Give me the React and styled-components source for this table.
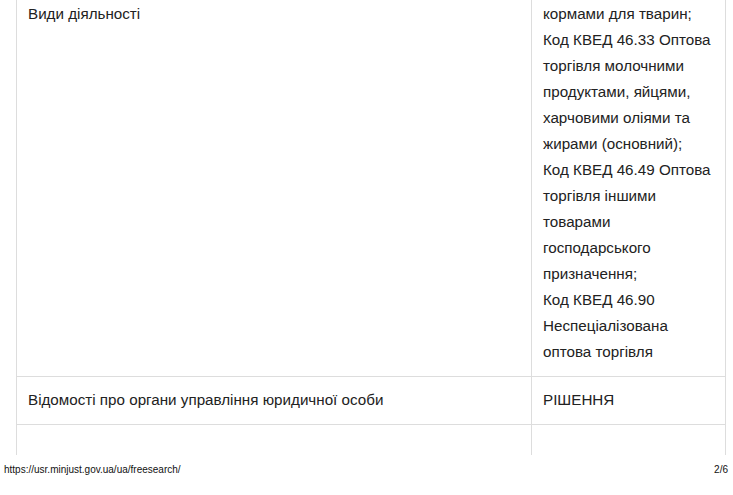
import React from "react";
import styled, { createGlobalStyle } from "styled-components";

const Global = createGlobalStyle`
  html, body { margin: 0; padding: 0; background: #fff; }
  body { font-family: "Liberation Sans", Arial, sans-serif; color: #222; }
`;

const Page = styled.div`
  width: 733px;
  height: 495px;
  display: flex;
  flex-direction: column;
  overflow: hidden;
`;

const Sheet = styled.div`
  height: 455px;
  overflow: hidden;
  padding: 0 8px 0 16px;
`;

const Table = styled.div`
  border-left: 1px solid #ddd;
  border-right: 1px solid #ddd;
  width: 708px;
`;

const Row = styled.div`
  display: grid;
  grid-template-columns: 514px 1fr;
  border-bottom: 1px solid #ddd;
`;

const Cell = styled.div`
  padding: ${(p) => (p.$continued ? "1px" : "10px")} 8px 11px 11px;
  font-size: 15.2px;
  line-height: 26px;
  min-height: ${(p) => (p.$empty ? "30px" : "0")};
  & + & {
    border-left: 1px solid #ddd;
  }
`;

const Entry = styled.div``;

const Footer = styled.div`
  display: flex;
  justify-content: space-between;
  align-items: center;
  height: 28px;
  padding: 0 5px 0 4px;
  font-size: 10px;
  color: #111;
`;

const activities = [
  "кормами для тварин;",
  "Код КВЕД 46.33 Оптова торгівля молочними продуктами, яйцями, харчовими оліями та жирами (основний);",
  "Код КВЕД 46.49 Оптова торгівля іншими товарами господарського призначення;",
  "Код КВЕД 46.90 Неспеціалізована оптова торгівля",
];

export default function App() {
  return (
    <Page>
      <Global />
      <Sheet>
        <Table>
          <Row>
            <Cell $continued>Види діяльності</Cell>
            <Cell $continued>
              {activities.map((a) => (
                <Entry key={a}>{a}</Entry>
              ))}
            </Cell>
          </Row>
          <Row>
            <Cell>Відомості про органи управління юридичної особи</Cell>
            <Cell>РІШЕННЯ</Cell>
          </Row>
          <Row>
            <Cell $empty />
            <Cell $empty />
          </Row>
        </Table>
      </Sheet>
      <Footer>
        <span>https://usr.minjust.gov.ua/ua/freesearch/</span>
        <span>2/6</span>
      </Footer>
    </Page>
  );
}
